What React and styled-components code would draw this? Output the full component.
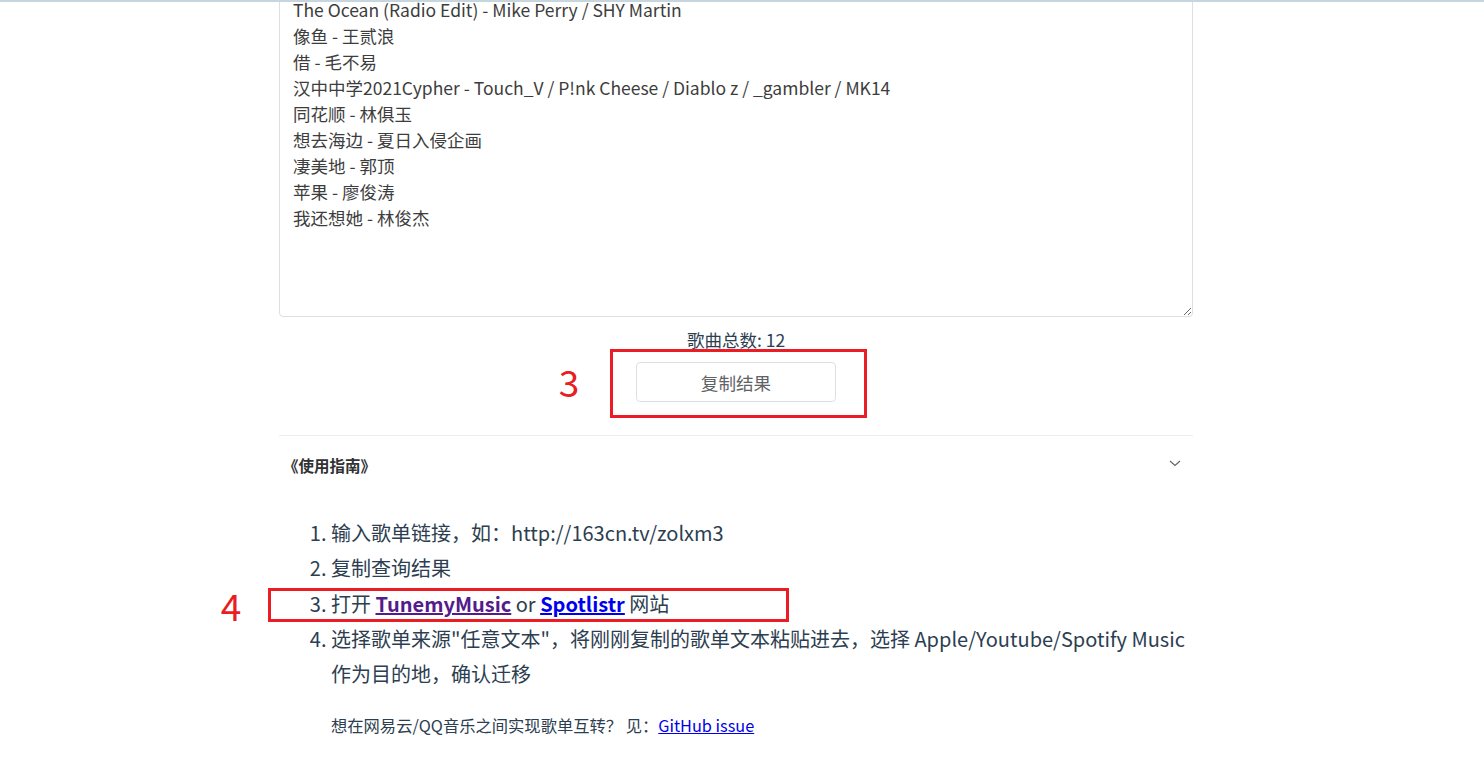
import React from 'react';
import styled, { createGlobalStyle } from 'styled-components';

const songs = [
  'The Ocean (Radio Edit) - Mike Perry / SHY Martin',
  '像鱼 - 王贰浪',
  '借 - 毛不易',
  '汉中中学2021Cypher - Touch_V / P!nk Cheese / Diablo z / _gambler / MK14',
  '同花顺 - 林俱玉',
  '想去海边 - 夏日入侵企画',
  '凄美地 - 郭顶',
  '苹果 - 廖俊涛',
  '我还想她 - 林俊杰',
];

const GlobalStyle = createGlobalStyle`
  html, body {
    margin: 0;
    padding: 0;
    background: #fff;
  }
  body {
    font-family: "Noto Sans CJK SC", "Noto Sans", sans-serif;
    color: #2c3e50;
    overflow: hidden;
  }
`;

// --- Layout ---

const TopEdge = styled.div`
  position: fixed;
  top: 0;
  left: 0;
  right: 0;
  height: 2px;
  background: #c6d5de;
  z-index: 10;
`;

const Page = styled.div`
  padding-right: 12px;
`;

const Main = styled.main`
  width: 914px;
  margin: -16px auto 0;
  display: flex;
  flex-direction: column;
`;

const ResultBox = styled.textarea`
  box-sizing: border-box;
  width: 100%;
  height: 333px;
  padding: 12px 13px;
  border: 1px solid #dcdfe6;
  border-radius: 4px;
  font-family: "Noto Sans CJK SC", sans-serif;
  font-size: 17.5px;
  line-height: 26px;
  color: #3d3d3d;
  background: #fff;
  resize: vertical;
  outline: none;
  margin: 0;
  display: block;
`;

const Count = styled.div`
  text-align: center;
  font-size: 17.5px;
  line-height: 24px;
  margin-top: 11px;
  color: #2c3e50;
`;

const ButtonRow = styled.div`
  display: flex;
  justify-content: center;
  margin-top: 10px;
`;

const Anchor = styled.div`
  position: relative;
`;

const CopyButton = styled.button`
  box-sizing: border-box;
  width: 200px;
  height: 40px;
  border: 1px solid #dcdfe6;
  border-radius: 4px;
  background: #fff;
  color: #606266;
  font-family: "Noto Sans CJK SC", sans-serif;
  font-size: 17.6px;
  cursor: pointer;
`;

// --- Red annotation marks ---

const Mark = styled.div`
  position: absolute;
  box-sizing: border-box;
  border: 3px solid #ea1c24;
  pointer-events: none;
`;

const MarkLabel = styled.span`
  position: absolute;
  font-family: "Noto Sans CJK SC", sans-serif;
  font-weight: 400;
  font-size: 37px;
  line-height: 38px;
  color: #ea1c24;
  transform: translateX(-50%);
  pointer-events: none;
`;

// --- Collapse ---

const Collapse = styled.section`
  margin-top: 33px;
  border-top: 1px solid #ebeef5;
`;

const CollapseHeader = styled.div`
  display: flex;
  align-items: center;
  justify-content: space-between;
  height: 57px;
  padding: 0 12px 0 4px;
  font-size: 15.5px;
  font-weight: 700;
  color: #303133;
  cursor: pointer;
`;

const Chevron = styled.svg`
  width: 12px;
  height: 12px;
  margin-top: -3px;
`;

const CollapseBody = styled.div`
  padding: 0 0 20px;
`;

const Steps = styled.ol`
  margin: 22px 0 0;
  padding-left: 52px;
  font-size: 20px;
  line-height: 35.3px;
  color: #2c3e50;
`;

const Step = styled.li`
  position: relative;
`;

const Link = styled.a`
  font-weight: ${({ $bold }) => ($bold ? 700 : 400)};
  color: ${({ $visited }) => ($visited ? '#551a8b' : '#0000ee')};
  text-decoration: underline;
`;

const Note = styled.p`
  margin: 22px 0 0 52px;
  font-size: 16.3px;
  line-height: 24px;
  color: #2c3e50;
`;

export default function App() {
  return (
    <>
      <GlobalStyle />
      <TopEdge />
      <Page>
        <Main>
          <ResultBox readOnly value={songs.join('\n')} />
          <Count>歌曲总数: 12</Count>
          <ButtonRow>
            <Anchor>
              <CopyButton>复制结果</CopyButton>
              <Mark style={{ left: -26, top: -13, width: 257, height: 69 }} />
              <MarkLabel style={{ left: -67, top: 0 }}>3</MarkLabel>
            </Anchor>
          </ButtonRow>

          <Collapse>
            <CollapseHeader>
              <span>《使用指南》</span>
              <Chevron viewBox="0 0 12 12" fill="none" stroke="#606266" strokeWidth="1.1">
                <path d="M1 4l5 4.5L11 4" />
              </Chevron>
            </CollapseHeader>
            <CollapseBody>
              <Steps>
                <Step>输入歌单链接，如：http://163cn.tv/zolxm3</Step>
                <Step>复制查询结果</Step>
                <Step>
                  打开 <Link $bold $visited href="#">TunemyMusic</Link> or{' '}
                  <Link $bold href="#">Spotlistr</Link> 网站
                  <Mark style={{ left: -63, top: 2, width: 521, height: 34 }} />
                  <MarkLabel style={{ left: -100, top: 0 }}>4</MarkLabel>
                </Step>
                <Step>
                  选择歌单来源"任意文本"，将刚刚复制的歌单文本粘贴进去，选择 Apple/Youtube/Spotify Music
                  作为目的地，确认迁移
                </Step>
              </Steps>
              <Note>
                想在网易云/QQ音乐之间实现歌单互转？ 见：<Link href="#">GitHub issue</Link>
              </Note>
            </CollapseBody>
          </Collapse>
        </Main>
      </Page>
    </>
  );
}
